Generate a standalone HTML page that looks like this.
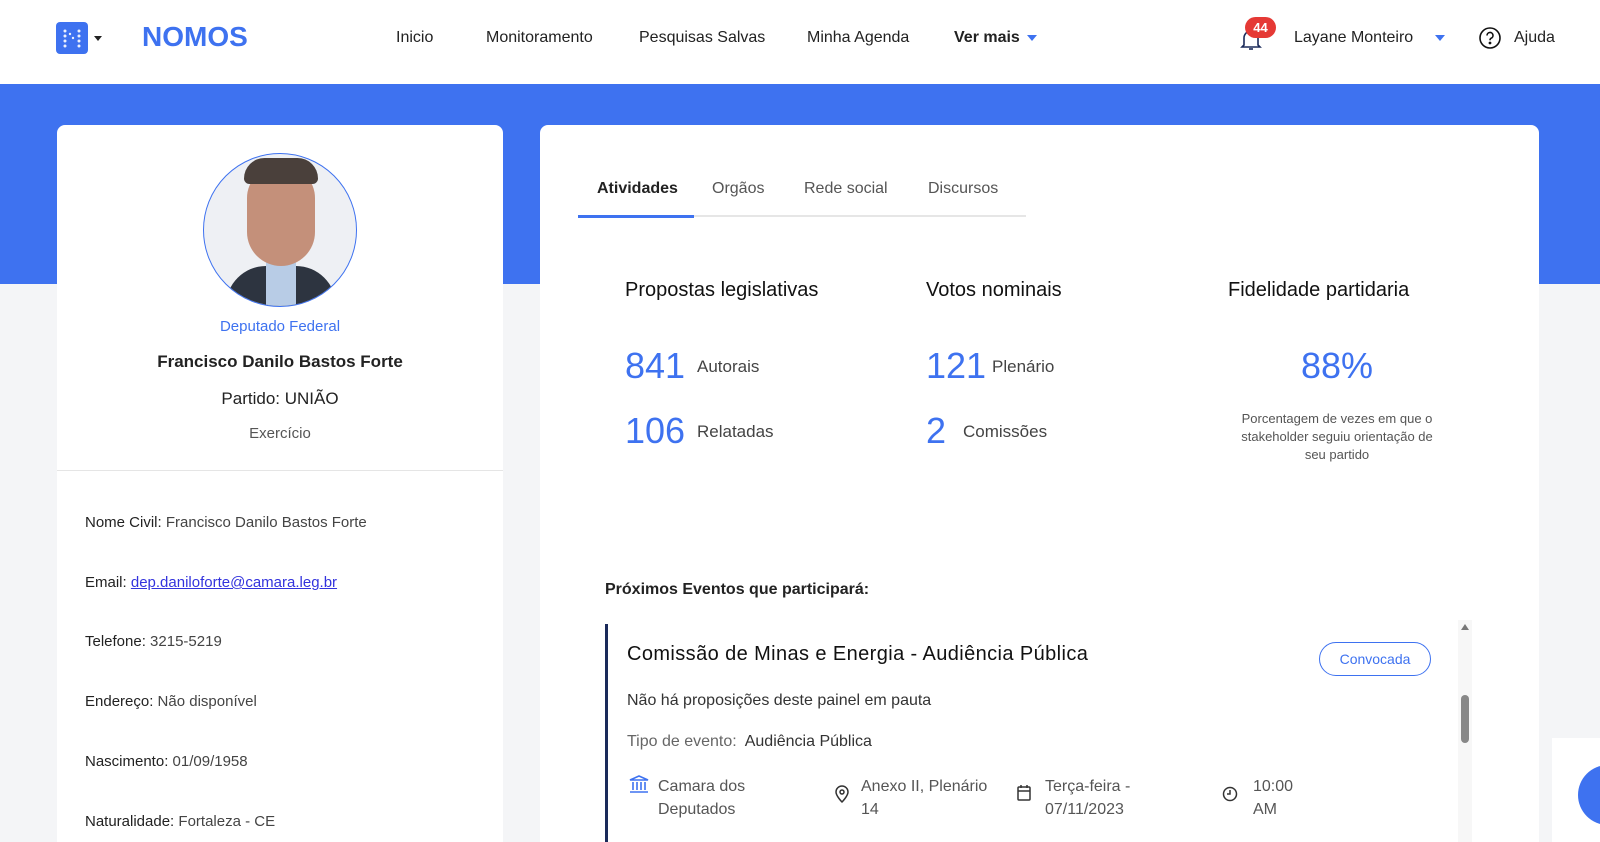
<!DOCTYPE html>
<html><head><meta charset="utf-8"><style>
*{box-sizing:border-box;margin:0;padding:0}
html,body{width:1600px;height:842px;overflow:hidden}
body{background:#f4f5f7;font-family:"Liberation Sans",sans-serif;color:#222;position:relative}
.top{position:absolute;left:0;top:0;width:1600px;height:84px;background:#fff}
.band{position:absolute;left:0;top:84px;width:1600px;height:200px;background:#3e72f0}
.nav a{position:absolute;top:29px;font-size:16px;color:#222}
.card{position:absolute;background:#fff;border-radius:8px 8px 0 0;overflow:hidden}
.blue{color:#3e72f0}
.lbl{position:absolute;left:28px;font-size:15px;color:#444}
.lbl b{font-weight:normal;color:#222}
</style></head><body>
<div class="top">
 <div style="position:absolute;left:56px;top:22px;width:32px;height:32px;background:#3e72f0;border-radius:4px"></div>
 <svg style="position:absolute;left:62px;top:28px" width="20" height="20"><g fill="#fff" opacity=".9"><circle cx="3" cy="3" r="1.5"/><circle cx="3" cy="8" r="1.5"/><circle cx="3" cy="13" r="1.5"/><circle cx="3" cy="18" r="1.5"/><circle cx="8" cy="6" r="1.2"/><circle cx="11" cy="10" r="1.2"/><circle cx="17" cy="3" r="1.5"/><circle cx="17" cy="8" r="1.5"/><circle cx="17" cy="13" r="1.5"/><circle cx="17" cy="18" r="1.5"/></g></svg>
 <div style="position:absolute;left:94px;top:36px;border:4px solid transparent;border-top:5px solid #222"></div>
 <div style="position:absolute;left:142px;top:21px;font-size:28px;font-weight:bold;color:#3e72f0">NOMOS</div>
 <div class="nav"><a style="left:396px">Inicio</a><a style="left:486px">Monitoramento</a><a style="left:639px">Pesquisas Salvas</a><a style="left:807px">Minha Agenda</a><a style="left:954px;font-weight:bold">Ver mais</a></div>
 <div style="position:absolute;left:1027px;top:35px;border:5px solid transparent;border-top:6px solid #3e72f0"></div>
 <svg style="position:absolute;left:1240px;top:28px" width="22" height="24" fill="none" stroke="#1a2a5a" stroke-width="1.6"><path d="M4 17V10a7 7 0 0 1 14 0v7l2 2H2z"/><path d="M9 21h4"/></svg>
 <div style="position:absolute;left:1245px;top:17px;width:31px;height:21px;border-radius:11px;background:#e53935;color:#fff;font-size:13px;font-weight:bold;text-align:center;line-height:21px">44</div>
 <div style="position:absolute;left:1294px;top:29px;font-size:16px;color:#222">Layane Monteiro</div>
 <div style="position:absolute;left:1435px;top:35px;border:5px solid transparent;border-top:6px solid #3e72f0"></div>
 <svg style="position:absolute;left:1478px;top:26px" width="24" height="24" fill="none" stroke="#111" stroke-width="1.6"><circle cx="12" cy="12" r="10"/><path d="M9 9.5a3 3 0 1 1 4 2.8c-.8.4-1 1-1 2"/><circle cx="12" cy="17" r=".6" fill="#111"/></svg>
 <div style="position:absolute;left:1514px;top:29px;font-size:16px;color:#222">Ajuda</div>
</div>
<div class="band"></div>
<div style="position:absolute;left:1552px;top:738px;width:48px;height:104px;background:#fff"></div>
<div style="position:absolute;left:1578px;top:765px;width:60px;height:60px;border-radius:50%;background:#3e72f0"></div>

<div class="card" style="left:57px;top:125px;width:446px;height:717px">
 <div style="position:absolute;left:146px;top:28px;width:154px;height:154px;border-radius:50%;border:1px solid #3e72f0;overflow:hidden;background:#eef0f4">
  <div style="position:absolute;left:22px;top:112px;width:110px;height:60px;border-radius:40px 40px 0 0;background:#2d3440"></div>
  <div style="position:absolute;left:62px;top:108px;width:30px;height:46px;background:#b8cce6"></div>
  <div style="position:absolute;left:43px;top:12px;width:68px;height:100px;border-radius:32px 32px 34px 34px;background:#c4907a"></div>
  <div style="position:absolute;left:40px;top:4px;width:74px;height:26px;border-radius:30px 30px 8px 8px;background:#4a403b"></div>
 </div>
 <div class="blue" style="position:absolute;left:0;width:446px;top:193px;text-align:center;font-size:15px">Deputado Federal</div>
 <div style="position:absolute;left:0;width:446px;top:227px;text-align:center;font-size:17px;font-weight:bold;color:#222">Francisco Danilo Bastos Forte</div>
 <div style="position:absolute;left:0;width:446px;top:264px;text-align:center;font-size:17px">Partido: UNIÃO</div>
 <div style="position:absolute;left:0;width:446px;top:300px;text-align:center;font-size:15px;color:#555">Exercício</div>
 <div style="position:absolute;left:0;top:345px;width:446px;border-top:1px solid #e5e5e5"></div>
 <div class="lbl" style="top:389px"><b>Nome Civil:</b> Francisco Danilo Bastos Forte</div>
 <div class="lbl" style="top:449px"><b>Email:</b> <span style="color:#3333dd;text-decoration:underline">dep.daniloforte@camara.leg.br</span></div>
 <div class="lbl" style="top:508px"><b>Telefone:</b> 3215-5219</div>
 <div class="lbl" style="top:568px"><b>Endereço:</b> Não disponível</div>
 <div class="lbl" style="top:628px"><b>Nascimento:</b> 01/09/1958</div>
 <div class="lbl" style="top:688px"><b>Naturalidade:</b> Fortaleza - CE</div>
</div>

<div class="card" style="left:540px;top:125px;width:999px;height:717px">
 <div style="position:absolute;left:38px;top:56px;width:448px;border-bottom:2px solid #e6e6e6;height:36px"></div>
 <div style="position:absolute;left:38px;top:90px;width:116px;height:3px;background:#3e72f0"></div>
 <div style="position:absolute;left:57px;top:55px;font-size:16px;font-weight:bold;color:#222">Atividades</div>
 <div style="position:absolute;left:172px;top:55px;font-size:16px;color:#555">Orgãos</div>
 <div style="position:absolute;left:264px;top:55px;font-size:16px;color:#555">Rede social</div>
 <div style="position:absolute;left:388px;top:55px;font-size:16px;color:#555">Discursos</div>

 <div style="position:absolute;left:85px;top:154px;font-size:20px;color:#111">Propostas legislativas</div>
 <div style="position:absolute;left:386px;top:154px;font-size:20px;color:#111">Votos nominais</div>
 <div style="position:absolute;left:688px;top:154px;font-size:20px;color:#111">Fidelidade partidaria</div>
 <div class="blue" style="position:absolute;left:85px;top:220px;font-size:36px">841</div>
 <div style="position:absolute;left:157px;top:232px;font-size:17px;color:#444">Autorais</div>
 <div class="blue" style="position:absolute;left:85px;top:285px;font-size:36px">106</div>
 <div style="position:absolute;left:157px;top:297px;font-size:17px;color:#444">Relatadas</div>
 <div class="blue" style="position:absolute;left:386px;top:220px;font-size:36px">121</div>
 <div style="position:absolute;left:452px;top:232px;font-size:17px;color:#444">Plenário</div>
 <div class="blue" style="position:absolute;left:386px;top:285px;font-size:36px">2</div>
 <div style="position:absolute;left:423px;top:297px;font-size:17px;color:#444">Comissões</div>
 <div class="blue" style="position:absolute;left:684px;top:220px;width:226px;text-align:center;font-size:36px">88%</div>
 <div style="position:absolute;left:694px;top:285px;width:206px;text-align:center;font-size:13px;line-height:18px;color:#555">Porcentagem de vezes em que o stakeholder seguiu orientação de seu partido</div>

 <div style="position:absolute;left:65px;top:456px;font-size:16px;font-weight:bold;color:#222">Próximos Eventos que participará:</div>
 <div style="position:absolute;left:65px;top:499px;width:852px;height:250px;border-left:3px solid #1a2a5a;border-bottom:1px solid #e3e3e3">
  <div style="position:absolute;left:19px;top:19px;font-size:20px;color:#111;letter-spacing:.4px">Comissão de Minas e Energia - Audiência Pública</div>
  <div style="position:absolute;left:711px;top:18px;width:112px;height:34px;border:1px solid #3e72f0;border-radius:17px;text-align:center;line-height:32px;font-size:14px;color:#3e72f0">Convocada</div>
  <div style="position:absolute;left:19px;top:68px;font-size:16px;color:#333">Não há proposições deste painel em pauta</div>
  <div style="position:absolute;left:19px;top:109px;font-size:16px;color:#666">Tipo de evento:&nbsp; <span style="color:#333">Audiência Pública</span></div>
  <svg style="position:absolute;left:20px;top:150px" width="22" height="20" fill="none" stroke="#3e72f0" stroke-width="1.6"><path d="M2 6L11 2l9 4z M3 6h16 M5 8v8 M9 8v8 M13 8v8 M17 8v8 M2 18h18"/></svg>
  <div style="position:absolute;left:50px;top:151px;font-size:16px;line-height:23px;color:#555">Camara dos<br>Deputados</div>
  <svg style="position:absolute;left:226px;top:160px" width="16" height="20" fill="none" stroke="#333" stroke-width="1.5"><path d="M8 18s6-6 6-10A6 6 0 0 0 2 8c0 4 6 10 6 10z"/><circle cx="8" cy="8" r="2"/></svg>
  <div style="position:absolute;left:253px;top:151px;font-size:16px;line-height:23px;color:#555">Anexo II, Plenário<br>14</div>
  <svg style="position:absolute;left:408px;top:160px" width="16" height="18" fill="none" stroke="#333" stroke-width="1.5"><rect x="2" y="3" width="12" height="13" rx="1"/><path d="M2 7h12 M5 1v3 M11 1v3"/></svg>
  <div style="position:absolute;left:437px;top:151px;font-size:16px;line-height:23px;color:#555">Terça-feira -<br>07/11/2023</div>
  <svg style="position:absolute;left:614px;top:162px" width="16" height="16" fill="none" stroke="#333" stroke-width="1.5"><circle cx="8" cy="8" r="6.5"/><path d="M8 4v4h-3"/></svg>
  <div style="position:absolute;left:645px;top:151px;font-size:16px;line-height:23px;color:#555">10:00<br>AM</div>
 </div>
 <div style="position:absolute;left:918px;top:495px;width:14px;height:250px;background:#f7f7f7"></div>
 <div style="position:absolute;left:921px;top:495px;border:4px solid transparent;border-bottom:6px solid #777"></div>
 <div style="position:absolute;left:921px;top:570px;width:8px;height:48px;border-radius:4px;background:#888"></div>
</div>
</body></html>
